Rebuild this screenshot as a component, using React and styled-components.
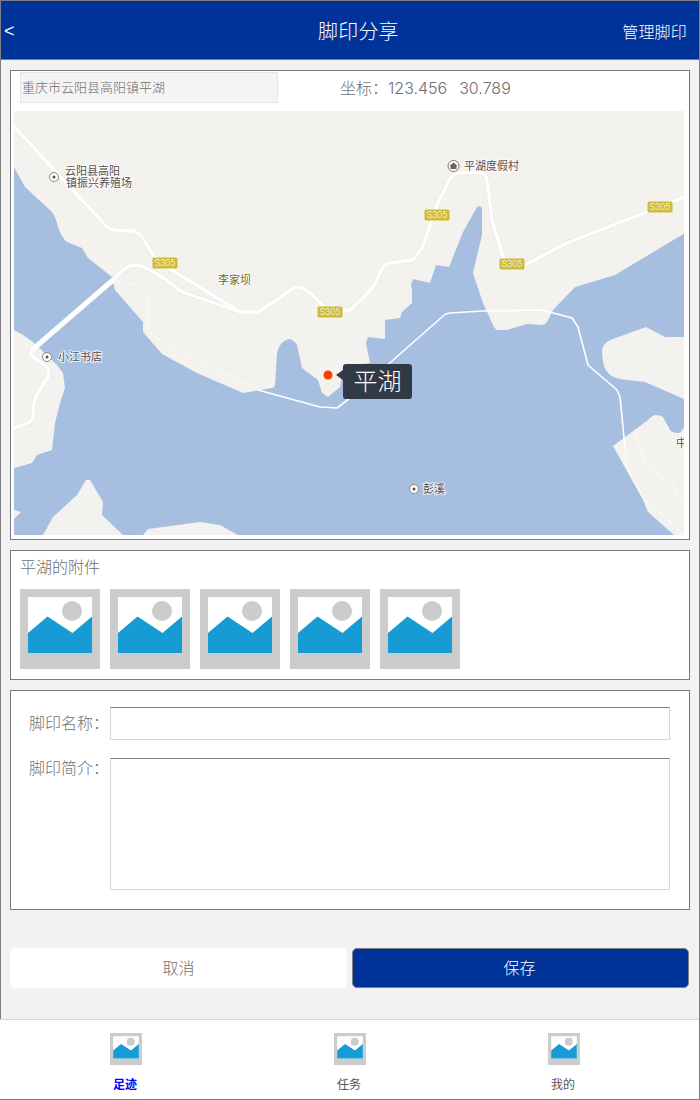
import React from "react";
import styled, { createGlobalStyle } from "styled-components";

const FONT = `"Liberation Sans", "Noto Sans CJK SC", sans-serif`;

const Global = createGlobalStyle`
  html, body { margin: 0; padding: 0; background: #fff; }
  * { box-sizing: border-box; }
  body { font-family: ${FONT}; }
`;

const Frame = styled.div`
  width: 700px;
  height: 1100px;
  border: 1px solid #7f7f7f;
  background: #f2f2f2;
  display: flex;
  flex-direction: column;
  font-weight: 300;
`;

const Header = styled.header`
  height: 59px;
  flex: none;
  background: #003399;
  border-bottom: 1px solid #7f7f7f;
  color: #fff;
  display: grid;
  grid-template-columns: 317px 81px 1fr;
  align-items: center;
`;
const Back = styled.span`
  font-size: 18px;
  padding: 3px 0 0 3px;
`;
const Title = styled.h1`
  margin: 0;
  font-size: 20px;
  font-weight: 300;
  white-space: nowrap;
  letter-spacing: 0.2px;
`;
const Manage = styled.span`
  font-size: 16px;
  text-align: right;
  padding-right: 12px;
  padding-top: 2px;
  letter-spacing: 0.2px;
`;

const Main = styled.main`
  padding: 10px 9px 0;
  display: flex;
  flex-direction: column;
  gap: 10px;
`;
const Card = styled.section`
  width: 680px;
  height: ${(p) => p.$h}px;
  background: #fff;
  border: 1px solid #797979;
`;
const LocationRow = styled.div`
  height: 40px;
  display: flex;
  padding: 1px 0 0 9px;
`;
const Address = styled.div`
  width: 258px;
  height: 31px;
  background: #f4f4f4;
  border: 1px solid #e4e4e4;
  color: #6e6e6e;
  font-size: 13px;
  line-height: 29px;
  padding-left: 1px;
`;
const Coords = styled.div`
  margin-left: 62px;
  height: 31px;
  line-height: 33px;
  font-size: 16px;
  color: #707070;
  white-space: pre;
`;
const CoordValue = styled.span`
  font-family: "Inter", "Liberation Sans", sans-serif;
  font-weight: 300;
  color: #6e6e6e;
  font-size: 16px;
  word-spacing: 1.5px;
`;
const MapBox = styled.div`
  position: relative;
  width: 670px;
  height: 424px;
  margin-left: 3px;
  overflow: hidden;
`;
const MapSvg = styled.svg`
  display: block;
  width: 670px;
  height: 424px;
`;
const SoftShapes = styled.g`
  filter: blur(0.5px);
`;
const Tip = styled.div`
  position: absolute;
  left: 329px;
  top: 253px;
  width: 69px;
  height: 35px;
  border-radius: 3px;
  background: rgba(44, 51, 64, 0.96);
  color: #fff;
  font-size: 24px;
  line-height: 35px;
  text-align: center;
  &::before {
    content: "";
    position: absolute;
    left: -7px;
    top: 6px;
    border: 5px solid transparent;
    border-left: 0;
    border-right: 7px solid rgba(44, 51, 64, 0.96);
  }
`;
const AttachTitle = styled.div`
  font-size: 16px;
  color: #707070;
  line-height: 22px;
  padding: 5px 0 0 9px;
  height: 28px;
  padding-top: 6px;
`;
const Thumbs = styled.div`
  display: flex;
  gap: 10px;
  padding: 10px 0 0 9px;
`;
const Ph = styled.svg`
  display: block;
  flex: none;
  width: ${(p) => p.$size}px;
  height: ${(p) => p.$size}px;
`;
const FormCard = styled(Card)`
  padding: 16px 19px 0 18px;
  display: grid;
  grid-template-columns: 81px 560px;
  grid-template-rows: 33px 132px;
  row-gap: 18px;
`;
const Label = styled.label`
  font-size: 16px;
  color: #707070;
  line-height: ${(p) => p.$lh}px;
  white-space: nowrap;
`;
const TextInput = styled.input`
  display: block;
  width: 560px;
  height: 33px;
  margin: 0;
  padding: 0 4px;
  background: #fff;
  border: 1px solid #d7d7d7;
  border-top-color: #7f7f7f;
  border-radius: 0;
  outline: none;
`;
const TextArea = styled.textarea`
  display: block;
  width: 560px;
  height: 132px;
  margin: 0;
  padding: 4px;
  background: #fff;
  border: 1px solid #d7d7d7;
  border-top-color: #7f7f7f;
  border-radius: 0;
  outline: none;
  resize: none;
`;
const Actions = styled.div`
  display: flex;
  gap: 5px;
  padding: 38px 0 0 9px;
`;
const Btn = styled.button`
  width: 337px;
  height: 40px;
  border-radius: 5px;
  border: ${(p) => (p.$primary ? "1px solid #7f7f7f" : "0")};
  background: ${(p) => (p.$primary ? "#003399" : "#fff")};
  color: ${(p) => (p.$primary ? "#fff" : "#707070")};
  font-family: ${FONT};
  font-size: 16px;
  font-weight: 300;
  padding: 0 ${(p) => (p.$primary ? 2 : 0)}px 2px 0;
`;
const TabBar = styled.nav`
  margin-top: auto;
  margin-left: -1px;
  height: 80px;
  flex: none;
  background: #fff;
  border-top: 1px solid #d7d7d7;
  display: grid;
  grid-template-columns: 224px 224px 204px;
  padding-left: 14px;
`;
const Tab = styled.div`
  display: flex;
  flex-direction: column;
  align-items: center;
  padding-top: 13px;
`;
const TabLabel = styled.span`
  margin-top: 12px;
  font-size: 12px;
  line-height: 16px;
  margin-left: -2px;
  font-weight: ${(p) => (p.$active ? 700 : 400)};
  color: ${(p) => (p.$active ? "#0000ff" : "#555")};
`;
const MapText = styled.text`
  font-family: ${FONT};
  font-size: 11px;
  font-weight: 400;
  fill: ${(p) => p.$color || "#57504c"};
  stroke: #fff;
  stroke-width: 2px;
  stroke-opacity: 0.75;
  paint-order: stroke;
`;
const Shield = styled.text`
  font-family: "Roboto", "Liberation Sans", sans-serif;
  font-size: 9px;
  fill: #fff;
  text-anchor: middle;
`;

const Placeholder = ({ size }) => (
  <Ph $size={size} viewBox="0 0 80 80">
    <rect width="80" height="80" fill="#ccc" />
    <rect x="8" y="8" width="64" height="56" fill="#fff" />
    <circle cx="52" cy="22" r="10" fill="#ccc" />
    <path d="M8 44 L27.5 27.5 L52.5 44 L72 27.5 V64 H8 Z" fill="#169bd5" />
  </Ph>
);

const WATER =
  "M8 160 L14 167 L25 187 L52 212 Q56 218 58 227 Q62 238 67 242 L82 248 L88 258 L112 277 L115 290 L143 322 L143 332 L162 354 L197 373 L243 393 L272 388 Q275 387 275 385 L277 353 Q279 345 283 342 Q287 339 290 339 Q295 341 297 345 L302 368 L318 380 L322 393 L328 397 L340 387 L343 367 L370 363 L366 343 L368 337 L385 339 L385 320 L400 318 L402 312 L412 303 L412 290 L411 285 L413 279 L430 283 L436 265 L449 267 L463 232 L477 207 Q480 205 482 208 L482 235 L473 273 L483 303 L493 325 Q495 330 498 330 L507 330 L527 324 L542 325 Q547 324 548 320 L553 310 L575 287 L615 275 L690 230 V430 L684 427 Q681 433 678 433 Q672 433 670 430 L663 417 Q660 415 655 415 Q651 416 648 420 L613 446 L643 500 L648 512 L674 535 V541 H238 V535 L220 525 L200 522 L148 529 L143 535 V541 H123 V535 L102 515 L103 502 L90 480 Q88 479 86 480 L77 495 L53 517 L43 535 V541 H8 V468 L14 468 L32 463 L37 455 L52 450 L55 423 L60 403 L65 388 L63 373 L57 365 L33 342 L23 335 L14 330 L8 330 Z";
const ISLAND =
  "M690 337 H665 L646 327 L610 340 Q602 344 602 352 Q602 368 610 375 Q616 379 627 380 L645 382 L684 399 L690 399 Z";
const ISLET = "M8 510 H14 L21 512 L14 519 H8 Z";
const ROADS = [
  "M8 120 L107 227 Q111 230 115 230 L133 231 Q138 232 143 238 L153 255 L167 267 L240 312",
  "M113 280 Q125 266 133 265 Q142 265 150 270 L167 280 Q175 288 185 293 L240 312 H258 L277 300 Q290 289 298 287 Q304 288 310 293 L330 313 L350 310 L363 298 L373 287 L383 267 Q386 263 390 263 L413 260 L422 248 L438 203 L450 179 Q454 173 460 173 L478 172 Q486 173 487 180 L492 220 L505 263 L512 266 L525 265 L567 243 L690 195",
  "M32 350 Q29 355 34 358 L46 366 Q50 370 48 377 L37 394 Q33 402 33 415 Q33 420 28 423 L8 430",
];
const BRIDGE =
  "M258 390 L320 407 L337 408 L350 398 L442 317 Q446 313 450 313 L483 311 L542 310 L572 318 L578 327 L588 365 L617 390 L620 397 L625 447";
const FAINT = [
  "M115 281 L137 285 L148 297 L147 330 L163 343 L258 390",
  "M625 447 L627 467 L645 500 L684 535",
  "M635 433 L648 468 L672 483 L684 507",
];
const SHIELDS = [
  [165, 263],
  [330, 312],
  [437, 215],
  [512, 264],
  [660, 207],
];
const POIS = [
  [54, 177],
  [47, 357],
  [414, 489],
];

const MapDrawing = () => (
  <MapSvg viewBox="14 111 670 424">
    <rect x="14" y="111" width="670" height="424" fill="#f3f2ef" />
    <SoftShapes>
      <path d={WATER} fill="#a6bfe0" />
      <path d={ISLAND} fill="#f3f2ef" />
      <path d={ISLET} fill="#f3f2ef" />
      {FAINT.map((d) => (
        <path key={d} d={d} fill="none" stroke="#f9f9f8" strokeWidth="1.2" />
      ))}
      {ROADS.map((d) => (
        <path key={d} d={d} fill="none" stroke="#e9e8e5" strokeWidth="4.6" strokeLinejoin="round" />
      ))}
      {ROADS.map((d) => (
        <path key={d + "w"} d={d} fill="none" stroke="#fff" strokeWidth="3.4" strokeLinejoin="round" />
      ))}
      <path d="M32 350 L113 280" fill="none" stroke="#fff" strokeWidth="5" />
      <path d={BRIDGE} fill="none" stroke="#fff" strokeWidth="1.6" strokeLinejoin="round" />
    </SoftShapes>
    {SHIELDS.map(([x, y]) => (
      <g key={x}>
        <rect x={x - 12.5} y={y - 5.5} width="25" height="11" rx="1.5" fill="#d0bb35" />
        <Shield x={x} y={y + 3.2}>S305</Shield>
      </g>
    ))}
    {POIS.map(([x, y]) => (
      <g key={x}>
        <circle cx={x} cy={y} r="4.5" fill="#fff" stroke="#8d8783" strokeWidth="1" />
        <circle cx={x} cy={y} r="1.5" fill="#57504c" />
      </g>
    ))}
    <circle cx="453.5" cy="166" r="5.5" fill="#fff" stroke="#7d7572" strokeWidth="1" />
    <path d="M449.5 166 L453.5 162.5 L457.5 166 H456.5 V169 H450.5 V166 Z" fill="#6b6461" />
    <MapText x="65" y="175">云阳县高阳</MapText>
    <MapText x="66" y="187">镇振兴养殖场</MapText>
    <MapText x="218" y="284" $color="#6f6f22">李家坝</MapText>
    <MapText x="464" y="170">平湖度假村</MapText>
    <MapText x="58" y="361">小江书店</MapText>
    <MapText x="423" y="493">彭溪</MapText>
    <MapText x="676" y="447">中</MapText>
    <circle cx="328" cy="375" r="4.5" fill="#ff3c00" />
  </MapSvg>
);

export default function App() {
  return (
    <Frame>
      <Global />
      <Header>
        <Back>&lt;</Back>
        <Title>脚印分享</Title>
        <Manage>管理脚印</Manage>
      </Header>
      <Main>
        <Card $h={470}>
          <LocationRow>
            <Address>重庆市云阳县高阳镇平湖</Address>
            <Coords>
              坐标：<CoordValue>123.456  30.789</CoordValue>
            </Coords>
          </LocationRow>
          <MapBox>
            <MapDrawing />
            <Tip>平湖</Tip>
          </MapBox>
        </Card>
        <Card $h={130}>
          <AttachTitle>平湖的附件</AttachTitle>
          <Thumbs>
            {[0, 1, 2, 3, 4].map((i) => (
              <Placeholder key={i} size={80} />
            ))}
          </Thumbs>
        </Card>
        <FormCard $h={220}>
          <Label $lh={34}>脚印名称：</Label>
          <TextInput />
          <Label $lh={22}>脚印简介：</Label>
          <TextArea />
        </FormCard>
      </Main>
      <Actions>
        <Btn>取消</Btn>
        <Btn $primary>保存</Btn>
      </Actions>
      <TabBar>
        <Tab>
          <Placeholder size={32} />
          <TabLabel $active>足迹</TabLabel>
        </Tab>
        <Tab>
          <Placeholder size={32} />
          <TabLabel>任务</TabLabel>
        </Tab>
        <Tab>
          <Placeholder size={32} />
          <TabLabel>我的</TabLabel>
        </Tab>
      </TabBar>
    </Frame>
  );
}
